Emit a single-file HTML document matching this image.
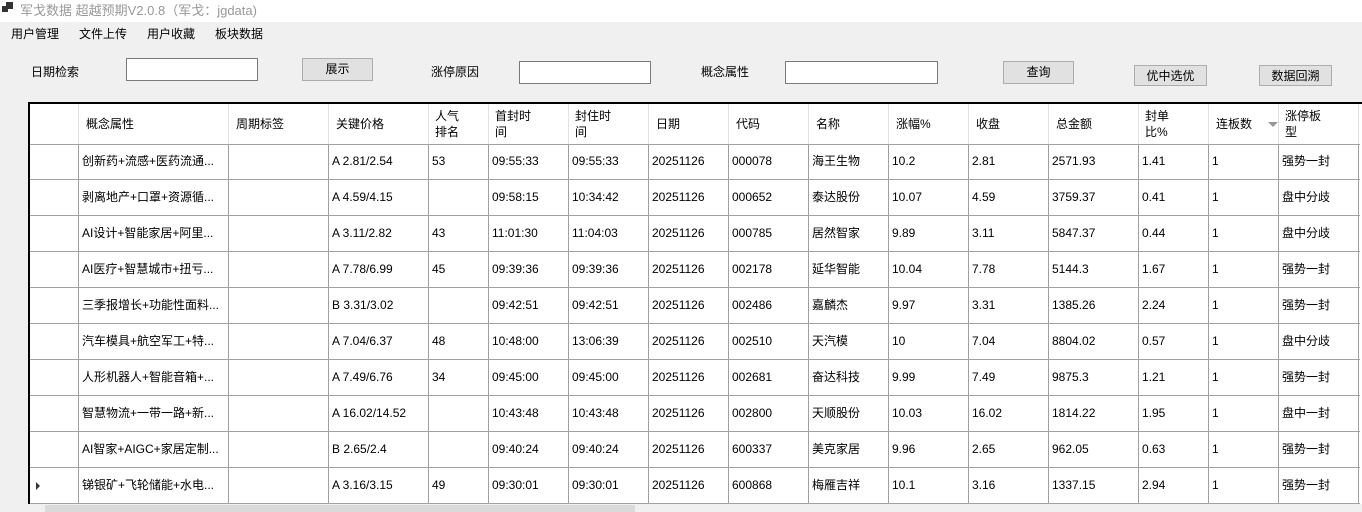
<!DOCTYPE html>
<html><head><meta charset="utf-8"><style>
*{margin:0;padding:0;box-sizing:border-box}
body{width:1362px;height:512px;overflow:hidden;background:#f0f0f0;font-family:"Liberation Sans","Noto Sans CJK SC",sans-serif;font-size:12px;color:#000;position:relative}
.a{position:absolute;white-space:nowrap;line-height:16px}
.title{left:0;top:0;width:1362px;height:22px;background:#fff}
.inp{background:#fff;border:1px solid #7a7a7a}
.btn{background:#e1e1e1;border:1px solid #adadad;text-align:center}
.grid{left:28px;top:102px;width:1334px;height:402px;background:#fff;border-top:2px solid #000;border-left:2px solid #000}
.v{position:absolute;width:1px;background:#a0a0a0}
.h{position:absolute;height:1px;background:#a0a0a0;left:0}
</style></head><body>
<div class="a title"></div>
<div class="a" style="left:2px;top:6px;width:6px;height:6px;background:#333"></div>
<div class="a" style="left:6px;top:2px;width:7px;height:7px;background:#333"></div>
<div class="a" style="left:20px;top:3px;color:#999;font-size:13px">军戈数据 超越预期V2.0.8（军戈：jgdata)</div>
<div class="a" style="left:11px;top:26px">用户管理</div>
<div class="a" style="left:79px;top:26px">文件上传</div>
<div class="a" style="left:147px;top:26px">用户收藏</div>
<div class="a" style="left:215px;top:26px">板块数据</div>

<div class="a" style="left:31px;top:64px">日期检索</div>
<div class="a inp" style="left:126px;top:58px;width:132px;height:23px"></div>
<div class="a btn" style="left:302px;top:58px;width:71px;height:23px;line-height:21px">展示</div>
<div class="a" style="left:431px;top:64px">涨停原因</div>
<div class="a inp" style="left:519px;top:61px;width:132px;height:23px"></div>
<div class="a" style="left:701px;top:64px">概念属性</div>
<div class="a inp" style="left:785px;top:61px;width:153px;height:23px"></div>
<div class="a btn" style="left:1003px;top:61px;width:71px;height:23px;line-height:21px">查询</div>
<div class="a btn" style="left:1134px;top:65px;width:73px;height:21px;line-height:20px">优中选优</div>
<div class="a btn" style="left:1259px;top:65px;width:73px;height:21px;line-height:20px">数据回溯</div>

<div class="a grid" id="g"></div>
<div class="a" style="left:30px;top:504px;width:1332px;height:8px;background:#f0f0f0"></div>
<div class="a" style="left:45px;top:505px;width:590px;height:7px;background:#dadada"></div>
<script>
var g=document.getElementById('g');
var cols=[28,78,228,328,428,488,568,648,728,808,888,968,1048,1138,1208,1278,1358];
var hd=['','概念属性','周期标签','关键价格','人气<br>排名','首封时<br>间','封住时<br>间','日期','代码','名称','涨幅%','收盘','总金额','封单<br>比%','连板数','涨停板<br>型'];
var rows=[
['创新药+流感+医药流通...','','A 2.81/2.54','53','09:55:33','09:55:33','20251126','000078','海王生物','10.2','2.81','2571.93','1.41','1','强势一封'],
['剥离地产+口罩+资源循...','','A 4.59/4.15','','09:58:15','10:34:42','20251126','000652','泰达股份','10.07','4.59','3759.37','0.41','1','盘中分歧'],
['AI设计+智能家居+阿里...','','A 3.11/2.82','43','11:01:30','11:04:03','20251126','000785','居然智家','9.89','3.11','5847.37','0.44','1','盘中分歧'],
['AI医疗+智慧城市+扭亏...','','A 7.78/6.99','45','09:39:36','09:39:36','20251126','002178','延华智能','10.04','7.78','5144.3','1.67','1','强势一封'],
['三季报增长+功能性面料...','','B 3.31/3.02','','09:42:51','09:42:51','20251126','002486','嘉麟杰','9.97','3.31','1385.26','2.24','1','强势一封'],
['汽车模具+航空军工+特...','','A 7.04/6.37','48','10:48:00','13:06:39','20251126','002510','天汽模','10','7.04','8804.02','0.57','1','盘中分歧'],
['人形机器人+智能音箱+...','','A 7.49/6.76','34','09:45:00','09:45:00','20251126','002681','奋达科技','9.99','7.49','9875.3','1.21','1','强势一封'],
['智慧物流+一带一路+新...','','A 16.02/14.52','','10:43:48','10:43:48','20251126','002800','天顺股份','10.03','16.02','1814.22','1.95','1','盘中一封'],
['AI智家+AIGC+家居定制...','','B 2.65/2.4','','09:40:24','09:40:24','20251126','600337','美克家居','9.96','2.65','962.05','0.63','1','强势一封'],
['锑银矿+飞轮储能+水电...','','A 3.16/3.15','49','09:30:01','09:30:01','20251126','600868','梅雁吉祥','10.1','3.16','1337.15','2.94','1','强势一封']];
var h='';
for(var i=1;i<cols.length;i++){var x=cols[i]-30;
h+='<div class="v" style="left:'+x+'px;top:0;height:40px;background:#e3e3e3"></div>';
h+='<div class="v" style="left:'+x+'px;top:40px;height:360px"></div>';}
h+='<div class="h" style="top:40px;width:1330px"></div>';
for(var r=0;r<10;r++)h+='<div class="h" style="top:'+(40+36*(r+1)-1)+'px;width:1330px"></div>';
for(var c=1;c<hd.length;c++){var two=hd[c].indexOf('<br>')>0;
h+='<div class="a" style="left:'+(cols[c]-30+(two?7:8))+'px;top:'+(two?4:12)+'px;line-height:16px">'+hd[c]+'</div>';}
h+='<div class="a" style="left:1238px;top:18px;width:0;height:0;border-left:5px solid transparent;border-right:5px solid transparent;border-top:5px solid #999"></div>';
for(var r=0;r<10;r++)for(var c=0;c<15;c++){
h+='<div class="a" style="left:'+(cols[c+1]-30+4)+'px;top:'+(40+36*r+9)+'px">'+rows[r][c]+'</div>';}
h+='<div class="a" style="left:6px;top:'+(40+36*9+14)+'px;width:0;height:0;border-top:4px solid transparent;border-bottom:4px solid transparent;border-left:4px solid #333"></div>';
g.innerHTML=h;
</script>
</body></html>
